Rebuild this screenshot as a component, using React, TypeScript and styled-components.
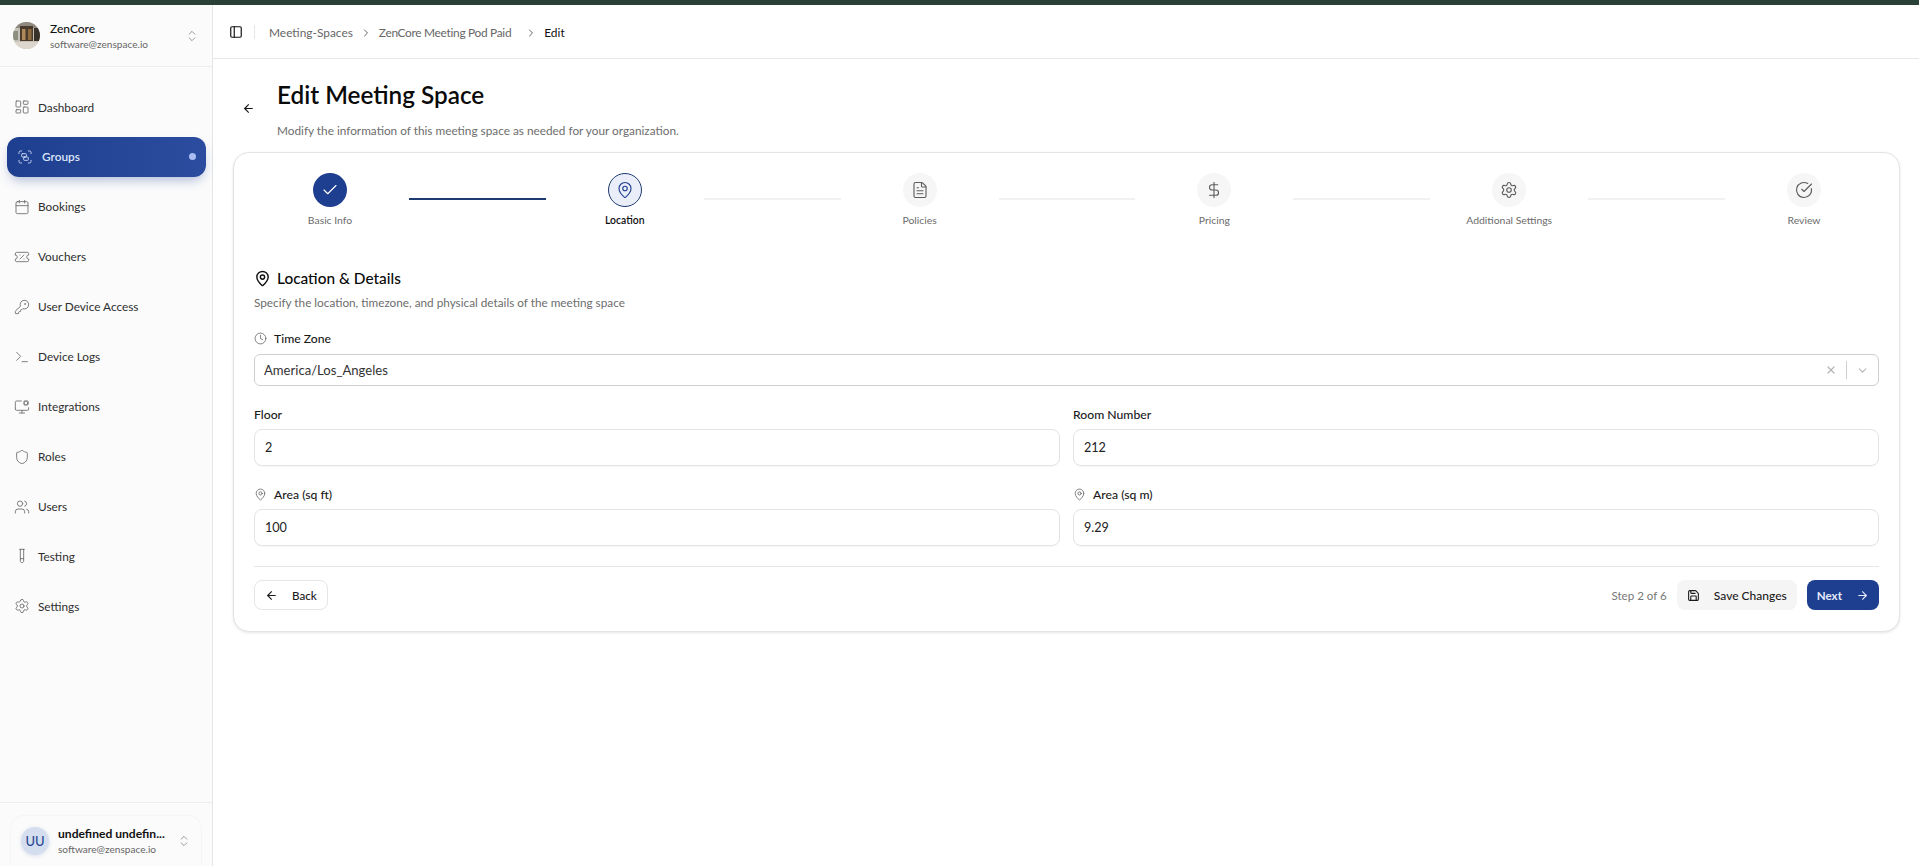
import React from "react";
import styled, { createGlobalStyle } from "styled-components";
import {
  ArrowLeft,
  ArrowRight,
  Calendar,
  Check,
  ChevronDown,
  ChevronRight,
  ChevronsUpDown,
  CircleCheckBig,
  Clock,
  DollarSign,
  FileText,
  Group,
  KeyRound,
  LayoutDashboard,
  MapPin,
  MonitorCog,
  PanelLeft,
  Save,
  Settings,
  Shield,
  Terminal,
  TestTube,
  TicketPercent,
  Users,
  X,
} from "lucide-react";

const GlobalStyle = createGlobalStyle`
  html, body {
    margin: 0;
    height: 100%;
    background: #fff;
    overflow: hidden;
  }
  body {
    font-family: "Lato", "Noto Sans", sans-serif;
    color: #0a0a0a;
  }
  * { box-sizing: border-box; }
`;

const Page = styled.div`
  height: 866px;
  display: flex;
  flex-direction: column;
`;

const TopStripe = styled.div`
  height: 5px;
  flex: none;
  background: #2a4138;
`;

const Shell = styled.div`
  flex: 1;
  display: flex;
  min-height: 0;
`;

const Sidebar = styled.aside`
  width: 213px;
  flex: none;
  display: flex;
  flex-direction: column;
  background: #fbfbfb;
  border-right: 1px solid #e6e6e6;
`;

const OrgHeader = styled.div`
  height: 62px;
  flex: none;
  display: flex;
  align-items: center;
  gap: 10px;
  padding: 0 13px;
  border-bottom: 1px solid #ececec;
`;

const OrgAvatar = styled.svg`
  width: 27px;
  height: 27px;
  flex: none;
  border-radius: 50%;
`;

const NameBlock = styled.div`
  flex: 1;
  min-width: 0;
  display: flex;
  flex-direction: column;
  gap: 1px;
`;

const OrgName = styled.div`
  font-size: 12px;
  font-weight: 500;
  line-height: 16px;
  color: #111;
`;

const SmallMail = styled.div`
  font-size: 10.1px;
  line-height: 13px;
  color: #666;
`;

const Updown = styled(ChevronsUpDown)`
  width: 14px;
  height: 14px;
  color: #8a8a8a;
  flex: none;
  stroke-width: 1.5;
`;

const Nav = styled.nav`
  flex: 1;
  display: flex;
  flex-direction: column;
  padding: 20px 6px 0 7px;
  gap: 9.95px;
`;

const NavItem = styled.div<{ $active?: boolean }>`
  height: 40px;
  display: flex;
  align-items: center;
  gap: ${(p) => (p.$active ? "9px" : "8px")};
  padding: 0 ${(p) => (p.$active ? "10px" : "7px")};
  border-radius: 12px;
  font-size: 11.8px;
  font-weight: ${(p) => (p.$active ? 600 : 400)};
  color: ${(p) => (p.$active ? "#dbe6fb" : "#2e2e2e")};
  background: ${(p) =>
    p.$active ? "linear-gradient(90deg, #1e3f8f, #2c4d9f)" : "transparent"};
  box-shadow: ${(p) =>
    p.$active ? "0 6px 12px -3px rgba(30, 64, 145, 0.35)" : "none"};

  svg {
    width: 16px;
    height: 16px;
    flex: none;
    stroke-width: 1.25;
    color: ${(p) => (p.$active ? "#dbe6fb" : "#666")};
  }
`;

const ActiveDot = styled.span`
  width: 7px;
  height: 7px;
  margin-left: auto;
  border-radius: 50%;
  background: #a9bdf2;
`;

const UserFooter = styled.div`
  height: 64px;
  flex: none;
  padding: 12px 10px 0;
  border-top: 1px solid #ececec;
`;

const UserCard = styled.div`
  height: 52px;
  display: flex;
  align-items: center;
  gap: 9px;
  padding: 0 10px 2px 10px;
  border-radius: 14px 14px 0 0;
  border: 1px solid #f5f5f5;
  border-bottom: 0;
`;

const UserAvatar = styled.div`
  width: 28px;
  height: 28px;
  flex: none;
  display: flex;
  align-items: center;
  justify-content: center;
  border-radius: 50%;
  background: #d5deee;
  color: #2a4a94;
  font-size: 13px;
  font-weight: 500;
  box-shadow: 0 1px 4px rgba(30, 64, 145, 0.15);
`;

const UserName = styled.div`
  font-size: 12.1px;
  font-weight: 700;
  line-height: 16px;
  color: #111;
  white-space: nowrap;
`;

const Main = styled.main`
  flex: 1;
  min-width: 0;
  display: flex;
  flex-direction: column;
`;

const Topbar = styled.header`
  height: 54px;
  flex: none;
  display: flex;
  align-items: center;
  padding: 0 16px;
  border-bottom: 1px solid #e8e8e8;
`;

const PanelIcon = styled(PanelLeft)`
  width: 14px;
  height: 14px;
  color: #111;
`;

const TopDivider = styled.span`
  width: 1px;
  height: 14px;
  margin: 0 14px 0 11px;
  background: #e5e5e5;
`;

const Crumbs = styled.div`
  display: flex;
  align-items: center;
  gap: 7px;
  padding-top: 2px;
  font-size: 11.9px;
  color: #666;

  svg {
    width: 12px;
    height: 12px;
    color: #666;
  }
`;

const MiddleCrumb = styled.span`
  padding-right: 7px;
  letter-spacing: -0.3px;
`;

const CurrentCrumb = styled.span`
  color: #111;
`;

const Content = styled.div`
  flex: 1;
  padding: 20px 19px 0 20px;
`;

const TitleRow = styled.div`
  display: flex;
  align-items: center;
  gap: 22px;
  padding-left: 9px;
  margin-bottom: 12px;
`;

const BackArrow = styled(ArrowLeft)`
  width: 13px;
  height: 13px;
  margin-bottom: 2px;
  color: #111;
`;

const Title = styled.h1`
  margin: 0;
  font-size: 24.3px;
  font-weight: 600;
  line-height: 32px;
  color: #0a0a0a;
`;

const Subtitle = styled.p`
  margin: 11px 0 0;
  font-size: 11.8px;
  line-height: 18px;
  color: #6d6d6d;
`;

const Card = styled.section`
  padding: 20px 20px 21px 20px;
  border: 1px solid #e4e4e4;
  border-radius: 16px;
  background: #fff;
  box-shadow: 0 1px 3px rgba(0, 0, 0, 0.1);
`;

const Stepper = styled.div`
  display: flex;
  align-items: flex-start;
  margin-bottom: 40px;
  padding-left: 1px;
`;

const Step = styled.div`
  width: 150px;
  flex: none;
  display: flex;
  flex-direction: column;
  align-items: center;
  gap: 6px;
`;

const StepCircle = styled.div<{ $state: "done" | "current" | "todo" }>`
  width: 34px;
  height: 34px;
  display: flex;
  align-items: center;
  justify-content: center;
  border-radius: 50%;
  background: ${(p) =>
    p.$state === "done" ? "#1e3f8f" : p.$state === "current" ? "#e9eef8" : "#f6f6f6"};
  border: ${(p) => (p.$state === "current" ? "1px solid #1e3a70" : "none")};
  color: ${(p) =>
    p.$state === "done" ? "#fff" : p.$state === "current" ? "#1e3f8f" : "#5c5c5c"};

  svg {
    width: 18px;
    height: 18px;
    stroke-width: 1.5;
  }
`;

const StepLabel = styled.div<{ $current?: boolean }>`
  font-size: 10.4px;
  line-height: 14px;
  font-weight: ${(p) => (p.$current ? 600 : 400)};
  color: ${(p) => (p.$current ? "#111" : "#6b6b6b")};
`;

const Connector = styled.div<{ $done?: boolean }>`
  flex: 1;
  height: 2px;
  margin: 25px 4px 0;
  background: ${(p) => (p.$done ? "#1e3a70" : "#f1f1f1")};
`;

const SectionTitle = styled.div`
  display: flex;
  align-items: center;
  gap: 6px;
  font-size: 15.4px;
  font-weight: 500;
  line-height: 22px;
  color: #0a0a0a;

  svg {
    width: 17px;
    height: 17px;
    color: #111;
  }
`;

const SectionHint = styled.p`
  margin: 6px 0 0;
  font-size: 11.75px;
  line-height: 16px;
  color: #6d6d6d;
`;

const Field = styled.div`
  display: flex;
  flex-direction: column;
  gap: 6px;
  min-width: 0;
`;

const TimeZoneField = styled(Field)`
  margin-top: 18px;
  gap: 7px;
`;

const FieldLabel = styled.label`
  display: flex;
  align-items: center;
  gap: 7px;
  height: 18px;
  font-size: 12.2px;
  font-weight: 500;
  color: #1a1a1a;

  svg {
    width: 13px;
    height: 13px;
    color: #666;
    stroke-width: 1.5;
  }
`;

const SelectBox = styled.div`
  height: 32px;
  display: flex;
  align-items: center;
  padding: 0 8px 0 9px;
  border: 1px solid #cfcfcf;
  border-radius: 6px;
  font-size: 13.1px;
  color: #333;
`;

const SelectValue = styled.span`
  flex: 1;
`;

const SelectClear = styled(X)`
  width: 12px;
  height: 12px;
  color: #b5b5b5;
  stroke-width: 2.5;
`;

const SelectSep = styled.span`
  width: 1px;
  height: 18px;
  margin: 0 9px;
  background: #cfcfcf;
`;

const SelectCaret = styled(ChevronDown)`
  width: 13px;
  height: 13px;
  color: #b5b5b5;
  margin-right: 1px;
`;

const Grid = styled.div`
  display: grid;
  grid-template-columns: 1fr 1fr;
  gap: 19px 13px;
  margin-top: 19px;
`;

const TextInput = styled.div`
  height: 37px;
  display: flex;
  align-items: center;
  padding: 0 10px;
  border: 1px solid #e3e3e3;
  border-radius: 8px;
  font-size: 12.6px;
  color: #222;
  box-shadow: 0 1px 1px rgba(0, 0, 0, 0.03);
`;

const FormFooter = styled.div`
  display: flex;
  align-items: center;
  justify-content: space-between;
  margin-top: 20px;
  padding-top: 13px;
  border-top: 1px solid #e6e6e6;
`;

const FooterRight = styled.div`
  display: flex;
  align-items: center;
`;

const StepCount = styled.span`
  margin-right: 10px;
  font-size: 11.6px;
  color: #777;
`;

const Button = styled.button<{ $kind: "outline" | "soft" | "primary" }>`
  height: 30px;
  display: flex;
  align-items: center;
  gap: 14px;
  padding: 0 10px;
  border-radius: 8px;
  font-family: inherit;
  font-size: ${(p) => (p.$kind === "soft" ? "12px" : "11.6px")};
  font-weight: ${(p) => (p.$kind === "primary" ? 700 : 500)};
  color: ${(p) => (p.$kind === "primary" ? "#e4ebfa" : "#1a1a1a")};
  background: ${(p) =>
    p.$kind === "primary" ? "#1e3f8f" : p.$kind === "soft" ? "#f5f5f5" : "#fff"};
  border: ${(p) => (p.$kind === "outline" ? "1px solid #e6e6e6" : "none")};
  margin-left: ${(p) => (p.$kind === "primary" ? "10px" : "0")};

  svg {
    width: 13px;
    height: 13px;
  }
`;

const navItems = [
  { label: "Dashboard", icon: LayoutDashboard },
  { label: "Groups", icon: Group, active: true },
  { label: "Bookings", icon: Calendar },
  { label: "Vouchers", icon: TicketPercent },
  { label: "User Device Access", icon: KeyRound },
  { label: "Device Logs", icon: Terminal },
  { label: "Integrations", icon: MonitorCog },
  { label: "Roles", icon: Shield },
  { label: "Users", icon: Users },
  { label: "Testing", icon: TestTube },
  { label: "Settings", icon: Settings },
];

const steps = [
  { label: "Basic Info", icon: Check, state: "done" as const },
  { label: "Location", icon: MapPin, state: "current" as const },
  { label: "Policies", icon: FileText, state: "todo" as const },
  { label: "Pricing", icon: DollarSign, state: "todo" as const },
  { label: "Additional Settings", icon: Settings, state: "todo" as const },
  { label: "Review", icon: CircleCheckBig, state: "todo" as const },
];

function RoomPhoto() {
  return (
    <OrgAvatar viewBox="0 0 27 27">
      <defs>
        <filter id="soft">
          <feGaussianBlur stdDeviation="0.6" />
        </filter>
      </defs>
      <rect width="27" height="27" fill="#c6c1b8" />
      <g filter="url(#soft)">
        <rect x="0" y="0" width="27" height="6" fill="#8f897f" />
        <rect x="7" y="4" width="13" height="15" fill="#4c3a2a" />
        <rect x="9" y="7" width="3.5" height="11" fill="#ae8a5a" />
        <rect x="15" y="7" width="3.5" height="11" fill="#8f6c40" />
        <rect x="0" y="9" width="5" height="9" fill="#8c8f7f" />
        <rect x="21" y="6" width="6" height="13" fill="#39322b" />
        <rect x="0" y="20" width="27" height="7" fill="#dcd6cc" />
      </g>
    </OrgAvatar>
  );
}

export default function App() {
  return (
    <Page>
      <GlobalStyle />
      <TopStripe />
      <Shell>
        <Sidebar>
          <OrgHeader>
            <RoomPhoto />
            <NameBlock>
              <OrgName>ZenCore</OrgName>
              <SmallMail>software@zenspace.io</SmallMail>
            </NameBlock>
            <Updown />
          </OrgHeader>
          <Nav>
            {navItems.map((item) => (
              <NavItem key={item.label} $active={item.active}>
                <item.icon />
                {item.label}
                {item.active && <ActiveDot />}
              </NavItem>
            ))}
          </Nav>
          <UserFooter>
            <UserCard>
              <UserAvatar>UU</UserAvatar>
              <NameBlock>
                <UserName>undefined undefin...</UserName>
                <SmallMail>software@zenspace.io</SmallMail>
              </NameBlock>
              <Updown />
            </UserCard>
          </UserFooter>
        </Sidebar>
        <Main>
          <Topbar>
            <PanelIcon />
            <TopDivider />
            <Crumbs>
              <span>Meeting-Spaces</span>
              <ChevronRight />
              <MiddleCrumb>ZenCore Meeting Pod Paid</MiddleCrumb>
              <ChevronRight />
              <CurrentCrumb>Edit</CurrentCrumb>
            </Crumbs>
          </Topbar>
          <Content>
            <TitleRow>
              <BackArrow />
              <div>
                <Title>Edit Meeting Space</Title>
                <Subtitle>
                  Modify the information of this meeting space as needed for your organization.
                </Subtitle>
              </div>
            </TitleRow>
            <Card>
              <Stepper>
                {steps.map((step, i) => (
                  <React.Fragment key={step.label}>
                    {i > 0 && <Connector $done={i === 1} />}
                    <Step>
                      <StepCircle $state={step.state}>
                        <step.icon />
                      </StepCircle>
                      <StepLabel $current={step.state === "current"}>{step.label}</StepLabel>
                    </Step>
                  </React.Fragment>
                ))}
              </Stepper>
              <SectionTitle>
                <MapPin />
                Location &amp; Details
              </SectionTitle>
              <SectionHint>
                Specify the location, timezone, and physical details of the meeting space
              </SectionHint>
              <TimeZoneField>
                <FieldLabel>
                  <Clock />
                  Time Zone
                </FieldLabel>
                <SelectBox>
                  <SelectValue>America/Los_Angeles</SelectValue>
                  <SelectClear />
                  <SelectSep />
                  <SelectCaret />
                </SelectBox>
              </TimeZoneField>
              <Grid>
                <Field>
                  <FieldLabel>Floor</FieldLabel>
                  <TextInput>2</TextInput>
                </Field>
                <Field>
                  <FieldLabel>Room Number</FieldLabel>
                  <TextInput>212</TextInput>
                </Field>
                <Field>
                  <FieldLabel>
                    <MapPin />
                    Area (sq ft)
                  </FieldLabel>
                  <TextInput>100</TextInput>
                </Field>
                <Field>
                  <FieldLabel>
                    <MapPin />
                    Area (sq m)
                  </FieldLabel>
                  <TextInput>9.29</TextInput>
                </Field>
              </Grid>
              <FormFooter>
                <Button $kind="outline">
                  <ArrowLeft />
                  Back
                </Button>
                <FooterRight>
                  <StepCount>Step 2 of 6</StepCount>
                  <Button $kind="soft">
                    <Save />
                    Save Changes
                  </Button>
                  <Button $kind="primary">
                    Next
                    <ArrowRight />
                  </Button>
                </FooterRight>
              </FormFooter>
            </Card>
          </Content>
        </Main>
      </Shell>
    </Page>
  );
}
